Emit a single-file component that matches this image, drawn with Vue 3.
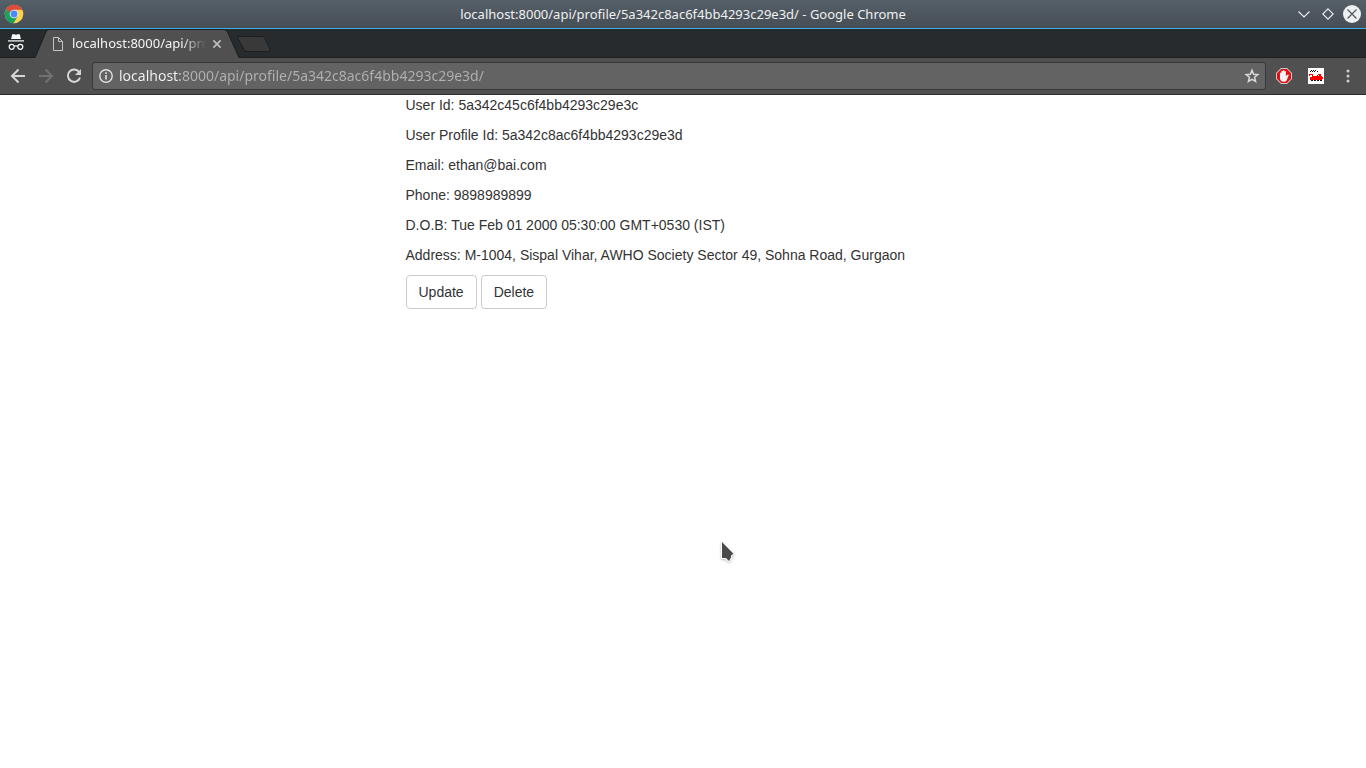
<script setup>
import { ref } from 'vue'

const address = ref('localhost:8000/api/profile/5a342c8ac6f4bb4293c29e3d/')
const title = 'localhost:8000/api/profile/5a342c8ac6f4bb4293c29e3d/'

const details = [
  { label: 'User Id', value: '5a342c45c6f4bb4293c29e3c' },
  { label: 'User Profile Id', value: '5a342c8ac6f4bb4293c29e3d' },
  { label: 'Email', value: 'ethan@bai.com' },
  { label: 'Phone', value: '9898989899' },
  { label: 'D.O.B', value: 'Tue Feb 01 2000 05:30:00 GMT+0530 (IST)' },
  { label: 'Address', value: 'M-1004, Sispal Vihar, AWHO Society Sector 49, Sohna Road, Gurgaon' },
]
</script>

<template>
  <div class="window">
    <header class="titlebar">
      <svg class="logo" width="20" height="20" viewBox="0 0 20 20" aria-hidden="true">
        <circle cx="10" cy="10" r="9.3" fill="#ffd24d" />
        <path d="M10 10 1.95 5.35A9.3 9.3 0 0 1 18.05 5.35L18.3 5.8H10z" fill="#dd4b3e" />
        <path d="M1.95 5.35A9.3 9.3 0 0 0 9.6 19.3L13.7 12.1 10 10 6.3 12.1z" fill="#1aa160" />
        <path d="M1.95 5.35 6.3 12.1 10 10V5.8z" fill="#dd4b3e" />
        <path d="M1.95 5.35 6.3 12.9 7.5 9z" fill="#1aa160" />
        <circle cx="10" cy="10" r="4.3" fill="#f1f1f1" />
        <circle cx="10" cy="10" r="3.4" fill="#4a8af4" />
      </svg>
      <div class="caption">{{ title }} - Google Chrome</div>
      <div class="controls">
        <button type="button" aria-label="Minimize">
          <svg width="18" height="18" viewBox="0 0 18 18"><path d="M3.5 6.5 9 12l5.5-5.5" fill="none" stroke="#eff0f1" stroke-width="1.1" /></svg>
        </button>
        <button type="button" aria-label="Maximize">
          <svg width="18" height="18" viewBox="0 0 18 18"><path d="M9 3.8 14.2 9 9 14.2 3.8 9z" fill="none" stroke="#eff0f1" stroke-width="1.1" /></svg>
        </button>
        <button type="button" aria-label="Close">
          <svg width="18" height="18" viewBox="0 0 18 18"><circle cx="9" cy="9" r="9" fill="#eff0f1" /><path d="m4.5 4.5 9 9m0-9-9 9" stroke="#4d565f" stroke-width="1.2" /></svg>
        </button>
      </div>
    </header>

    <div class="tabstrip">
      <svg class="incognito" width="18" height="18" viewBox="0 0 18 18" aria-label="Incognito" role="img">
        <path d="M5.2 1.2h2l1.8.5 1.8-.5h2L13.9 6H4.1z" fill="#fff" />
        <path d="M1 7.3h16v1.2H1z" fill="#fff" />
        <g fill="none" stroke="#fff" stroke-width="1.2">
          <circle cx="4.7" cy="13.8" r="2.5" />
          <circle cx="13.3" cy="13.8" r="2.5" />
          <path d="M7.2 13.3q1.8-1 3.6 0" />
        </g>
      </svg>
      <div class="tab">
        <svg class="tab-shape" width="206" height="29" viewBox="0 0 206 29" aria-hidden="true">
          <path d="M1 29 12 3Q13 .5 15.5 .5H190Q192.500 .5 193.500 3L205 29z" fill="#505050" />
          <path d="M1 28.500 12 3Q13 .5 15.500 .5H190Q192.500 .5 193.500 3L205 28.500" fill="none" stroke="#1c1e1f" />
        </svg>
        <svg class="page-icon" width="12" height="14" viewBox="0 0 12 14" aria-hidden="true">
          <path d="M1.500 .5h5l4 4v9h-9zM6.500 .5v4h4" fill="none" stroke="#c4c4c4" />
        </svg>
        <span class="tab-title">{{ title }}</span>
        <button type="button" class="tab-close" aria-label="Close tab">
          <svg width="10" height="10" viewBox="0 0 10 10"><path d="m1.400 1.400 7.200 7.200m0-7.200-7.200 7.200" stroke="#c0c0c0" stroke-width="1.600" /></svg>
        </button>
      </div>
      <button type="button" class="new-tab" aria-label="New tab">
        <svg width="36" height="18" viewBox="0 0 36 18"><path d="M3 1.500h23q2 0 3 2l5 11q.5 2-1.500 2H11q-2 0-3-2l-6-11q-1-2 1-2z" fill="#393939" stroke="#1c1d1e" /></svg>
      </button>
    </div>

    <nav class="toolbar">
      <button type="button" aria-label="Back">
        <svg width="16" height="16" viewBox="0 0 16 16"><path d="M15 8H2.500M8.500 1.500 2 8l6.500 6.500" fill="none" stroke="#d6d6d6" stroke-width="2" /></svg>
      </button>
      <button type="button" aria-label="Forward" disabled>
        <svg width="16" height="16" viewBox="0 0 16 16"><path d="M1 8h12.500M7.500 1.500 14 8l-6.500 6.500" fill="none" stroke="#717171" stroke-width="2" /></svg>
      </button>
      <button type="button" aria-label="Reload">
        <svg width="16" height="16" viewBox="0 0 16 16"><path d="M13.300 4.300A6.200 6.200 0 1 0 14 9.500" fill="none" stroke="#d6d6d6" stroke-width="2" /><path d="M15 1v6H9z" fill="#d6d6d6" /></svg>
      </button>
      <div class="omnibox">
        <button type="button" aria-label="Site information">
          <svg width="14" height="14" viewBox="0 0 14 14"><circle cx="7" cy="7" r="6.200" fill="none" stroke="#e0e0e0" stroke-width="1.400" /><path d="M6.200 6h1.600v4.500H6.200zM6.200 3.300h1.600v1.600H6.200z" fill="#e0e0e0" /></svg>
        </button>
        <input v-model="address" type="text" aria-label="Address" spellcheck="false" />
        <button type="button" aria-label="Bookmark this page">
          <svg width="16" height="16" viewBox="0 0 16 16"><path d="m8 2.200 1.600 4 4.200.3-3.200 2.800 1 4.200L8 11.300l-3.600 2.200 1-4.200-3.200-2.800 4.200-.3z" fill="none" stroke="#dadada" stroke-width="1.500" /></svg>
        </button>
      </div>
      <button type="button" class="extension" aria-label="AdBlock">
        <svg width="16" height="16" viewBox="0 0 16 16">
          <path d="M4.900 0h6.200L16 4.900v6.200L11.100 16H4.900L0 11.100V4.900z" fill="#c9c9c9" />
          <path d="M5.200 1h5.600L15 5.200v5.600L10.800 15H5.200L1 10.800V5.200z" fill="#e30f13" />
          <path d="M4 5q.7-.8 1.400 0V3.300q.7-.9 1.400 0V2.500q.8-.9 1.600 0v.8q.8-.7 1.500.2v4.700q.8-1.600 2.200-1.700.9.200.5 1L10.700 12.200q-.8 1.500-2.900 1.500-3.800 0-3.800-3.700z" fill="#f3f3f3" />
        </svg>
      </button>
      <button type="button" class="extension" aria-label="Train extension">
        <svg width="16" height="16" viewBox="0 0 16 16" shape-rendering="crispEdges">
          <path d="M0 0h16v16H0z" fill="#fff" />
          <path d="M1 6h4v2h4V7h1v1h1V7h-1V6h3v2h1v1h1v2h-1v1H2v-3h2V7H2v1H1z" fill="#f00" />
          <path d="M2 3h1v1H2zM3 2h1v1H3zM4 3h1v1H4zM5 2h1v1H5zM6 3h1v1H6zM7 2h1v1H7zM9 3h1v1H9zM3 12h2v1H3zM6 12h2v1H6zM9 12h2v1H9zM12 12h2v1h-2z" fill="#111" />
        </svg>
      </button>
      <button type="button" aria-label="Chrome menu">
        <svg width="16" height="16" viewBox="0 0 16 16" fill="#d0d0d0"><circle cx="8" cy="3" r="1.500" /><circle cx="8" cy="8" r="1.500" /><circle cx="8" cy="13" r="1.500" /></svg>
      </button>
    </nav>

    <main class="container">
      <div class="profile">
        <p v-for="item in details" :key="item.label">{{ item.label }}: {{ item.value }}</p>
        <div class="actions">
          <button type="button" class="btn">Update</button>
          <button type="button" class="btn">Delete</button>
        </div>
      </div>
    </main>

    <svg class="pointer" width="18" height="26" viewBox="0 0 18 26" aria-hidden="true">
      <path d="M4 2v16h4l3 3 2-3.500v-2l2.500-1.800z" fill="#4a4a4a" stroke="#fff" stroke-width="2" stroke-linejoin="round" paint-order="stroke" />
    </svg>
  </div>
</template>

<style>
body {
  background: #fff;
}
</style>

<style scoped>
.window {
  position: relative;
  min-height: 100vh;
  font-family: "Noto Sans", sans-serif;
}
button {
  display: flex;
  align-items: center;
  justify-content: center;
  flex: none;
  padding: 0;
  border: 0;
  background: none;
}
svg {
  display: block;
}
.titlebar {
  display: grid;
  grid-template-columns: 80px 1fr 80px;
  align-items: center;
  height: 28px;
  border-bottom: 1px solid #3daee9;
  background: linear-gradient(#566069, #454d55);
}
.logo {
  margin-left: 4px;
}
.caption {
  color: #eff0f1;
  font-size: 13px;
  line-height: 28px;
  text-align: center;
  white-space: nowrap;
}
.controls {
  display: flex;
  justify-content: flex-end;
  gap: 6px;
  padding-right: 5px;
}
.tabstrip {
  display: flex;
  height: 29px;
  background: #272b2d;
  box-shadow: inset 0 -1px #1c1e1f;
}
.incognito {
  margin: 4px 9px 0 7px;
}
.tab {
  position: relative;
  display: flex;
  align-items: center;
  box-sizing: border-box;
  width: 206px;
  padding: 0 18px;
}
.tab-shape {
  position: absolute;
  inset: 0;
}
.page-icon,
.tab-title,
.tab-close {
  position: relative;
}
.tab-title {
  flex: 1;
  min-width: 0;
  margin: 0 6px 2px 8px;
  overflow: hidden;
  color: #f4f4f4;
  font-size: 13px;
  line-height: 26px;
  white-space: nowrap;
  mask-image: linear-gradient(to right, #000 82%, transparent);
}
.new-tab {
  align-self: center;
  margin-left: -4px;
}
.toolbar {
  display: flex;
  align-items: center;
  gap: 12px;
  height: 36px;
  padding: 0 10px;
  border-bottom: 1px solid #2b2b2b;
  background: #505050;
}
.omnibox {
  display: flex;
  flex: 1;
  align-items: center;
  gap: 6px;
  box-sizing: border-box;
  height: 28px;
  margin: 0 -2px;
  padding: 0 5px 0 6px;
  border: 1px solid #383838;
  border-radius: 3px;
  background: #636363;
}
.omnibox input {
  flex: 1;
  min-width: 0;
  height: 26px;
  padding: 0 0 2px;
  box-sizing: border-box;
  border: 0;
  outline: 0;
  background: linear-gradient(to right, #f5f5f5 61px, #b1b1b1 61px);
  background-clip: text;
  color: transparent;
  font: 14px "Noto Sans", sans-serif;
}
.extension {
  margin-right: 4px;
}
.container {
  box-sizing: border-box;
  max-width: 1170px;
  margin: 0 auto;
  color: #333;
  font: 14px/20px "Liberation Sans", Arial, sans-serif;
}
.profile {
  box-sizing: border-box;
  margin-left: 25%;
  width: 50%;
  padding: 0 15px;
}
.profile p {
  margin: 0 0 10px;
}
.actions {
  display: flex;
  gap: 4px;
}
.btn {
  padding: 6px 12px;
  border: 1px solid #ccc;
  border-radius: 4px;
  background: #fff;
  color: #333;
  font: inherit;
}
.pointer {
  position: absolute;
  top: 540px;
  left: 718px;
  filter: drop-shadow(0 1px 1px #bbb);
}
</style>
